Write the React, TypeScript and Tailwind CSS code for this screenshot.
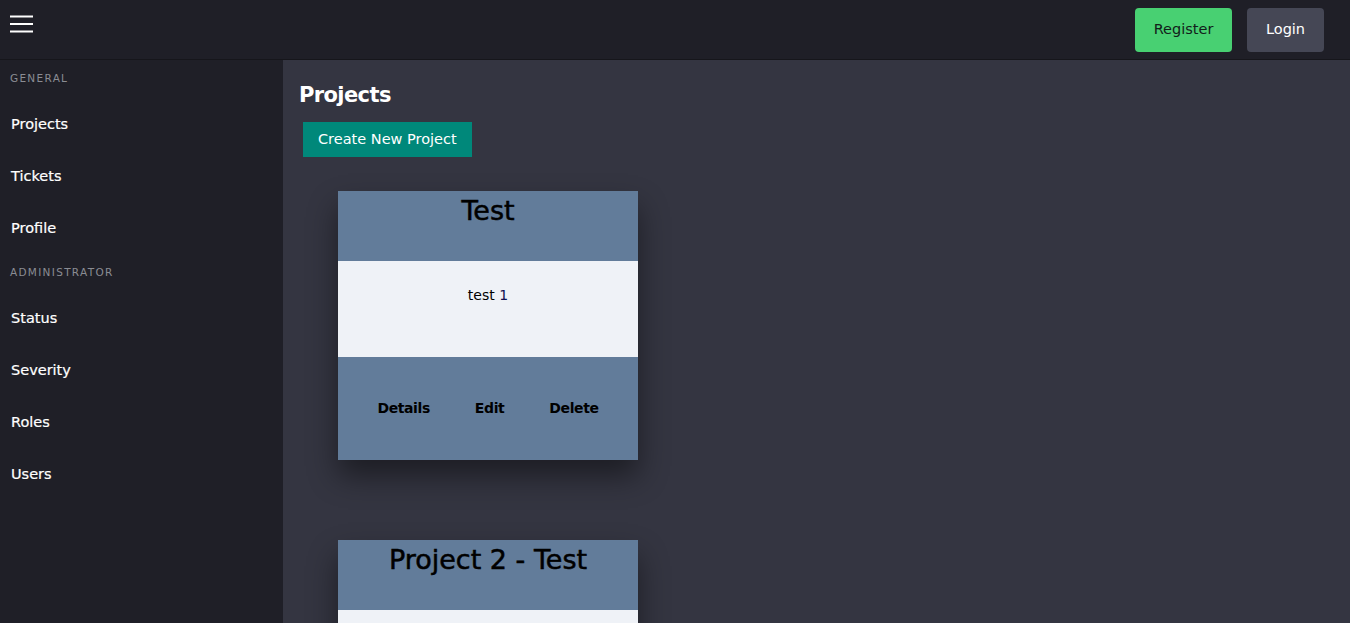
const projects = [
  { id: 1, name: "Test", description: "test 1" },
  { id: 2, name: "Project 2 - Test", description: "second project" },
];

const SideSection = ({ title, items }: { title: string; items: string[] }) => (
  <div>
    <p className="pl-[10px] pt-[11px] pb-[13px] text-[10.5px] tracking-[1.3px] text-[#8a8c93] leading-[14px]">
      {title}
    </p>
    <ul>
      {items.map((item) => (
        <li key={item}>
          <a className="block h-[52px] pl-[11px] pt-[16px] text-[14.5px] text-white leading-[20px] [-webkit-text-stroke:0.2px_white]">
            {item}
          </a>
        </li>
      ))}
    </ul>
  </div>
);

const ProjectCard = ({ name, description }: { name: string; description: string }) => (
  <div className="w-[300px] shadow-[0_16px_28px_rgba(0,0,0,0.45)]">
    <div className="h-[70px] bg-[#627c9a] text-center pt-[4px]">
      <h2 className="text-[27px] leading-[32px] text-black [-webkit-text-stroke:0.5px_black]">
        {name}
      </h2>
    </div>
    <div className="h-[96px] bg-[#eff2f7] text-center pt-[25px]">
      <p className="text-[14px] leading-[18px] text-black">
        {description.replace(/ \d+$/, " ")}
        <span className="text-[#101050]">{description.match(/\d+$/)?.[0]}</span>
      </p>
    </div>
    <div className="h-[103px] bg-[#627c9a] flex items-center justify-center gap-[45px]">
      <button className="text-[14px] tracking-[-0.4px] font-bold text-black">Details</button>
      <button className="text-[14px] tracking-[-0.4px] font-bold text-black">Edit</button>
      <button className="text-[14px] tracking-[-0.4px] font-bold text-black">Delete</button>
    </div>
  </div>
);

export default function App() {
  return (
    <div
      className="h-[623px] overflow-hidden flex flex-col bg-[#1f1f27]"
      style={{ fontFamily: '"DejaVu Sans", sans-serif' }}
    >
      {/* Top bar */}
      <header className="h-[60px] shrink-0 flex items-center justify-between border-b border-[#16161b] bg-[#1f1f27]">
        <button className="ml-[10px] mb-[12px] text-white">
          <svg width="23" height="18" viewBox="0 0 23 18" fill="none" stroke="currentColor" strokeWidth="2">
            <line x1="0" y1="1.5" x2="23" y2="1.5" />
            <line x1="0" y1="9" x2="23" y2="9" />
            <line x1="0" y1="16.5" x2="23" y2="16.5" />
          </svg>
        </button>
        <div className="flex gap-[15px] mr-[26px]">
          <button className="h-[44px] w-[97px] rounded-[4px] bg-[#48d072] text-[14.5px] text-[#12201a]">
            Register
          </button>
          <button className="h-[44px] w-[77px] rounded-[4px] bg-[#454755] text-[14.5px] text-white">
            Login
          </button>
        </div>
      </header>

      <div className="flex flex-1 min-h-0">
        {/* Sidebar */}
        <aside className="w-[283px] shrink-0 bg-[#1f1f27]">
          <SideSection title="GENERAL" items={["Projects", "Tickets", "Profile"]} />
          <SideSection title="ADMINISTRATOR" items={["Status", "Severity", "Roles", "Users"]} />
        </aside>

        {/* Main */}
        <main className="flex-1 bg-[#343541] pl-[16px] pt-[21px]">
          <h1 className="text-[21px] font-bold tracking-[-0.6px] text-white leading-[28px]">Projects</h1>
          <button className="mt-[13px] ml-[4px] h-[35px] px-[15px] bg-[#00887a] text-[14.5px] text-white">
            Create New Project
          </button>
          <div className="flex flex-col gap-[80px] mt-[34px] ml-[39px]">
            {projects.map((p) => (
              <ProjectCard key={p.id} name={p.name} description={p.description} />
            ))}
          </div>
        </main>
      </div>
    </div>
  );
}
